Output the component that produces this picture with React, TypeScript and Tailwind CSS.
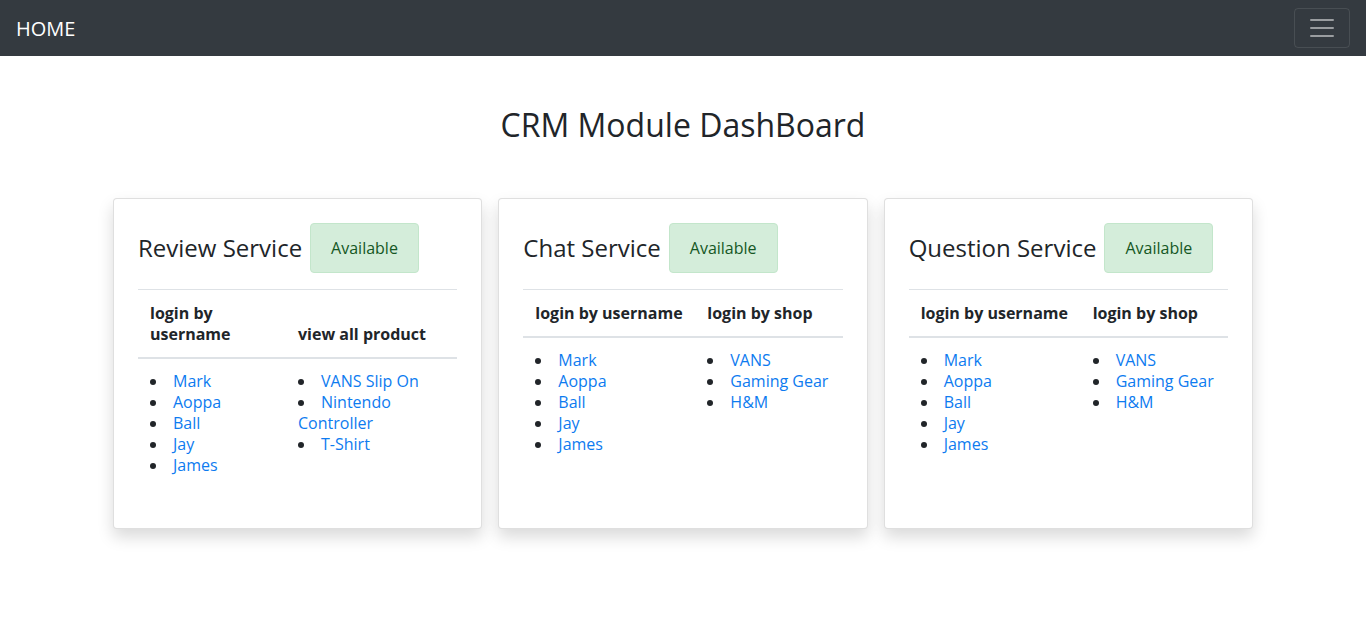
const services = [
  {
    title: "Review Service",
    cols: [
      { head: "login by username", width: "w-[148px]", items: ["Mark", "Aoppa", "Ball", "Jay", "James"] },
      { head: "view all product", width: "", items: ["VANS Slip On", "Nintendo Controller", "T-Shirt"] },
    ],
  },
  {
    title: "Chat Service",
    cols: [
      { head: "login by username", width: "w-[172px]", items: ["Mark", "Aoppa", "Ball", "Jay", "James"] },
      { head: "login by shop", width: "", items: ["VANS", "Gaming Gear", "H&M"] },
    ],
  },
  {
    title: "Question Service",
    cols: [
      { head: "login by username", width: "w-[172px]", items: ["Mark", "Aoppa", "Ball", "Jay", "James"] },
      { head: "login by shop", width: "", items: ["VANS", "Gaming Gear", "H&M"] },
    ],
  },
];

function ServiceCard({ title, cols }: (typeof services)[number]) {
  return (
    <div className="flex-1 rounded border border-[rgba(0,0,0,0.125)] bg-white p-6 shadow-[0_8px_16px_rgba(0,0,0,0.15)]">
      <div className="mb-4 flex items-center gap-2">
        <h3 className="text-2xl leading-[1.2] font-medium">{title}</h3>
        <div className="rounded border border-[#c3e6cb] bg-[#d4edda] px-5 py-3 text-base leading-6 text-[#155724]">
          Available
        </div>
      </div>
      <table className="mb-4 w-full table-fixed border-collapse text-base leading-[21px]">
        <thead>
          <tr>
            {cols.map((c) => (
              <th
                key={c.head}
                className={`${c.width} border-t border-b-2 border-t-[#dee2e6] border-b-[#dee2e6] px-3 pt-[13px] pb-3 text-left align-bottom font-bold`}
              >
                {c.head}
              </th>
            ))}
          </tr>
        </thead>
        <tbody>
          <tr>
            {cols.map((c) => (
              <td key={c.head} className="px-3 py-3 align-top">
                <ul className="list-inside list-disc">
                  {c.items.map((it) => (
                    <li key={it}>
                      <a href="#" className="text-[#0d7bf0]">
                        {it}
                      </a>
                    </li>
                  ))}
                </ul>
              </td>
            ))}
          </tr>
        </tbody>
      </table>
    </div>
  );
}

export default function App() {
  return (
    <div className="min-h-screen bg-white font-['Open_Sans',sans-serif] text-[#212529]">
      <nav className="flex h-14 items-center justify-between bg-[#343a40] px-4">
        <a href="#" className="pt-0.5 text-xl leading-[30px] text-white">
          HOME
        </a>
        <button className="flex h-10 w-14 items-center justify-center rounded border border-[rgba(255,255,255,0.1)]">
          <svg width="30" height="30" viewBox="0 0 30 30">
            <path
              d="M4 7h22M4 15h22M4 23h22"
              stroke="rgba(255,255,255,0.5)"
              strokeWidth="2"
              strokeLinecap="round"
            />
          </svg>
        </button>
      </nav>
      <h2 className="mt-[50px] mb-[54px] text-center text-[32px] leading-[1.2] font-medium">CRM Module DashBoard</h2>
      <div className="mx-auto flex w-[1140px] gap-4">
        {services.map((s) => (
          <ServiceCard key={s.title} {...s} />
        ))}
      </div>
    </div>
  );
}
